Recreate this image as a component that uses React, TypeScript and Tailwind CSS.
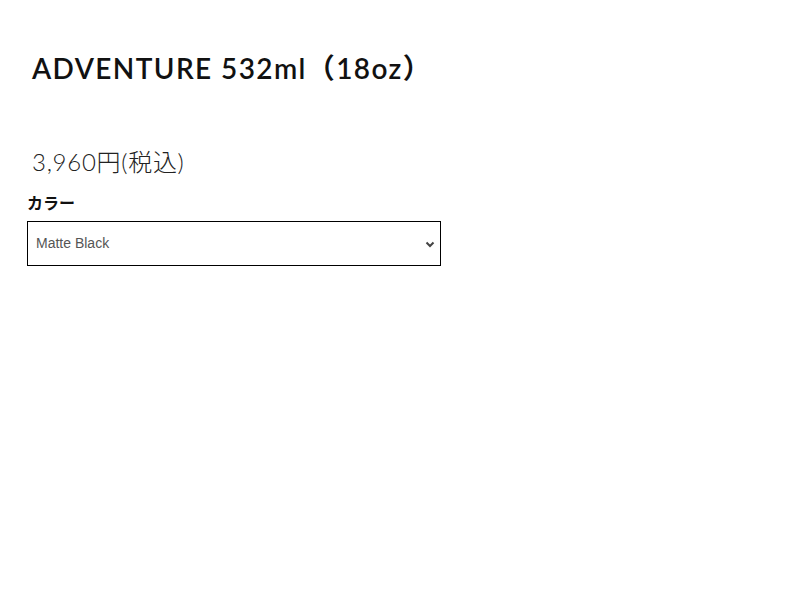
import React from "react";

export default function App() {
  return (
    <div className="w-[800px] h-[600px] bg-white">
      <div className="pt-[50px] pl-[32px]">
        <h1 className="text-[28px] leading-[36px] font-semibold tracking-[0.05em] text-[#111] [font-family:'Lato','Noto_Sans_CJK_JP',sans-serif]">
          ADVENTURE 532ml（18oz）
        </h1>
      </div>
      <div className="pt-[61px] pl-[32px]">
        <p className="text-[24px] leading-[30px] font-light tracking-[0.03em] text-[#222] [font-family:'Lato','Noto_Sans_CJK_JP',sans-serif]">
          3,960円(税込)
        </p>
      </div>
      <div className="pl-[27px] pt-[15px]">
        <div className="text-[16px] leading-[20px] font-bold text-[#111] [font-family:'Noto_Sans_CJK_JP',sans-serif]">
          カラー
        </div>
        <div className="mt-[9px] w-[414px] h-[45px] border border-black flex items-center justify-between pl-[8px] pr-[4px]">
          <span className="text-[14px] text-[#555] [font-family:'Liberation_Sans',sans-serif]">Matte Black</span>
          <svg width="12" height="12" viewBox="0 0 12 12">
            <path d="M2.5 4.5 L6 8 L9.5 4.5" fill="none" stroke="#444" strokeWidth="2" />
          </svg>
        </div>
      </div>
    </div>
  );
}
